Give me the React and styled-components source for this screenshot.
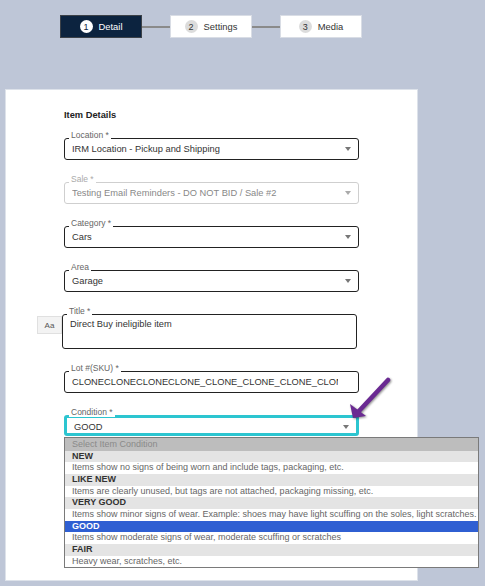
import React from 'react'
import styled, { createGlobalStyle } from 'styled-components'

const GlobalStyle = createGlobalStyle`
  body {
    margin: 0;
    background: #bec6d7;
    font-family: "Liberation Sans", Arial, sans-serif;
  }
`;

const Page = styled.div`
  padding-top: 15px;
  min-height: 586px;
  box-sizing: border-box;
`;

const Stepper = styled.div`
  display: flex;
  align-items: center;
  margin-left: 60px;
`;

const Step = styled.div`
  width: 82px;
  height: 23px;
  box-sizing: border-box;
  display: flex;
  align-items: center;
  justify-content: center;
  gap: 6px;
  font-size: 9.4px;
  background: ${p => (p.$active ? '#0c233f' : '#fff')};
  border: 1px solid ${p => (p.$active ? '#3c4148' : '#d9dde5')};
  color: ${p => (p.$active ? '#fff' : '#333')};
`;

const StepNum = styled.span`
  width: 13px;
  height: 13px;
  border-radius: 50%;
  display: flex;
  align-items: center;
  justify-content: center;
  font-size: 9px;
  background: ${p => (p.$active ? '#fff' : '#dcdcdc')};
  color: ${p => (p.$active ? '#0c233f' : '#333')};
`;

const Connector = styled.div`
  width: 28px;
  height: 2px;
  background: #8a8a8a;
`;

const Card = styled.div`
  margin: 51px 0 0 5px;
  width: 413px;
  height: 492px;
  box-sizing: border-box;
  background: #fff;
  border: 1px solid #dde2ea;
  padding: 19px 0 0 58px;
`;

const Heading = styled.h3`
  margin: 0 0 16px;
  font-size: 9.3px;
  line-height: 13px;
  font-weight: bold;
  color: #222;
`;

const Form = styled.div`
  display: flex;
  flex-direction: column;
  gap: 22px;
  width: 295px;
`;

const Field = styled.div`
  position: relative;
`;

const Label = styled.span`
  position: absolute;
  left: 5px;
  top: -8px;
  padding: 0 2px;
  background: #fff;
  font-size: 8.5px;
  line-height: 10px;
  color: ${p => (p.$disabled ? '#aaa' : '#666')};
  z-index: 1;
`;

const Box = styled.div`
  height: ${p => p.$h || 22}px;
  box-sizing: border-box;
  border: ${p =>
    p.$focus ? '3px solid #2cc5d0' : `1px solid ${p.$disabled ? '#cfcfcf' : '#222'}`};
  border-radius: 3px;
  display: flex;
  align-items: ${p => (p.$multi ? 'flex-start' : 'center')};
  padding: ${p => (p.$multi ? '2px' : p.$focus ? '2px' : '0')} ${p => p.$pr ?? 7}px 0 7px;
  background: #fff;
`;

const Value = styled.span`
  flex: 1;
  min-width: 0;
  font-size: 9.3px;
  line-height: 14px;
  white-space: nowrap;
  overflow: hidden;
  color: ${p => (p.$disabled ? '#888' : '#333')};
`;

const Caret = styled.span`
  flex: none;
  width: 0;
  height: 0;
  margin-left: 6px;
  border-left: 3.5px solid transparent;
  border-right: 3.5px solid transparent;
  border-top: 4px solid ${p => (p.$disabled ? '#aaa' : '#777')};
`;

const TitleRow = styled.div`
  display: flex;
  align-items: flex-start;
  margin-left: -27px;
`;

const FontToggle = styled.div`
  width: 25px;
  height: 18px;
  margin-top: 2px;
  box-sizing: border-box;
  display: flex;
  align-items: center;
  justify-content: center;
  background: #f3f3f3;
  border: 1px solid #e0e0e0;
  font-size: 8px;
  color: #555;
`;

const TitleField = styled(Field)`
  width: 295px;
`;

const Menu = styled.div`
  position: absolute;
  top: calc(100% + 1px);
  left: 0;
  width: 415px;
  box-sizing: border-box;
  border: 1px solid #7a7a7a;
  background: #fff;
  z-index: 2;
`;

const rowColors = {
  header: ['#bdbdbd', '#8a8a8a'],
  title: ['#e4e4e4', '#333'],
  desc: ['#fff', '#666'],
  selected: ['#2f5fd2', '#fff'],
};

const MenuRow = styled.div`
  height: ${p => (p.$kind === 'header' ? 12.5 : 11.7)}px;
  line-height: ${p => (p.$kind === 'header' ? 12.5 : 11.7)}px;
  padding: 0 7px;
  font-size: 9px;
  white-space: nowrap;
  overflow: hidden;
  font-weight: ${p => (p.$kind === 'title' || p.$kind === 'selected' ? 'bold' : 'normal')};
  background: ${p => rowColors[p.$kind][0]};
  color: ${p => rowColors[p.$kind][1]};
`;

const Pointer = styled.svg`
  position: absolute;
  left: 283px;
  top: -39px;
  width: 48px;
  height: 48px;
  overflow: visible;
  filter: drop-shadow(1px 1px 1px rgba(0, 0, 0, 0.45));
  z-index: 3;
`;

const conditions = [
  ['NEW', 'Items show no signs of being worn and include tags, packaging, etc.'],
  ['LIKE NEW', 'Items are clearly unused, but tags are not attached, packaging missing, etc.'],
  ['VERY GOOD', 'Items show minor signs of wear. Example: shoes may have light scuffing on the soles, light scratches.'],
  ['GOOD', 'Items show moderate signs of wear, moderate scuffing or scratches'],
  ['FAIR', 'Heavy wear, scratches, etc.'],
];

function SelectField({ label, value, disabled }) {
  return (
    <Field>
      <Label $disabled={disabled}>{label}</Label>
      <Box $disabled={disabled}>
        <Value $disabled={disabled}>{value}</Value>
        <Caret $disabled={disabled} />
      </Box>
    </Field>
  );
}

export default function App() {
  const selected = 'GOOD';
  return (
    <Page>
      <GlobalStyle />
      <Stepper>
        <Step $active>
          <StepNum $active>1</StepNum>Detail
        </Step>
        <Connector />
        <Step>
          <StepNum>2</StepNum>Settings
        </Step>
        <Connector />
        <Step>
          <StepNum>3</StepNum>Media
        </Step>
      </Stepper>

      <Card>
        <Heading>Item Details</Heading>
        <Form>
          <SelectField label="Location *" value="IRM Location - Pickup and Shipping" />
          <SelectField label="Sale *" value="Testing Email Reminders - DO NOT BID / Sale #2" disabled />
          <SelectField label="Category *" value="Cars" />
          <SelectField label="Area" value="Garage" />

          <TitleRow>
            <FontToggle>Aa</FontToggle>
            <TitleField>
              <Label>Title *</Label>
              <Box $h={35} $multi>
                <Value>Direct Buy ineligible item</Value>
              </Box>
            </TitleField>
          </TitleRow>

          <Field>
            <Label>Lot #(SKU) *</Label>
            <Box $pr={20}>
              <Value>CLONECLONECLONECLONE_CLONE_CLONE_CLONE_CLONE_CLONE</Value>
            </Box>
          </Field>

          <Field>
            <Label>Condition *</Label>
            <Box $h={21} $focus>
              <Value>{selected}</Value>
              <Caret />
            </Box>
            <Menu>
              <MenuRow $kind="header">Select Item Condition</MenuRow>
              {conditions.map(([name, desc]) => (
                <React.Fragment key={name}>
                  <MenuRow $kind={name === selected ? 'selected' : 'title'}>{name}</MenuRow>
                  <MenuRow $kind="desc">{desc}</MenuRow>
                </React.Fragment>
              ))}
            </Menu>
            <Pointer viewBox="0 0 48 48">
              <line x1="41" y1="4" x2="12" y2="35" stroke="#6a2a92" strokeWidth="4.5" strokeLinecap="round" />
              <polygon points="6,42 3,28 19,40" fill="#6a2a92" />
            </Pointer>
          </Field>
        </Form>
      </Card>
    </Page>
  );
}
